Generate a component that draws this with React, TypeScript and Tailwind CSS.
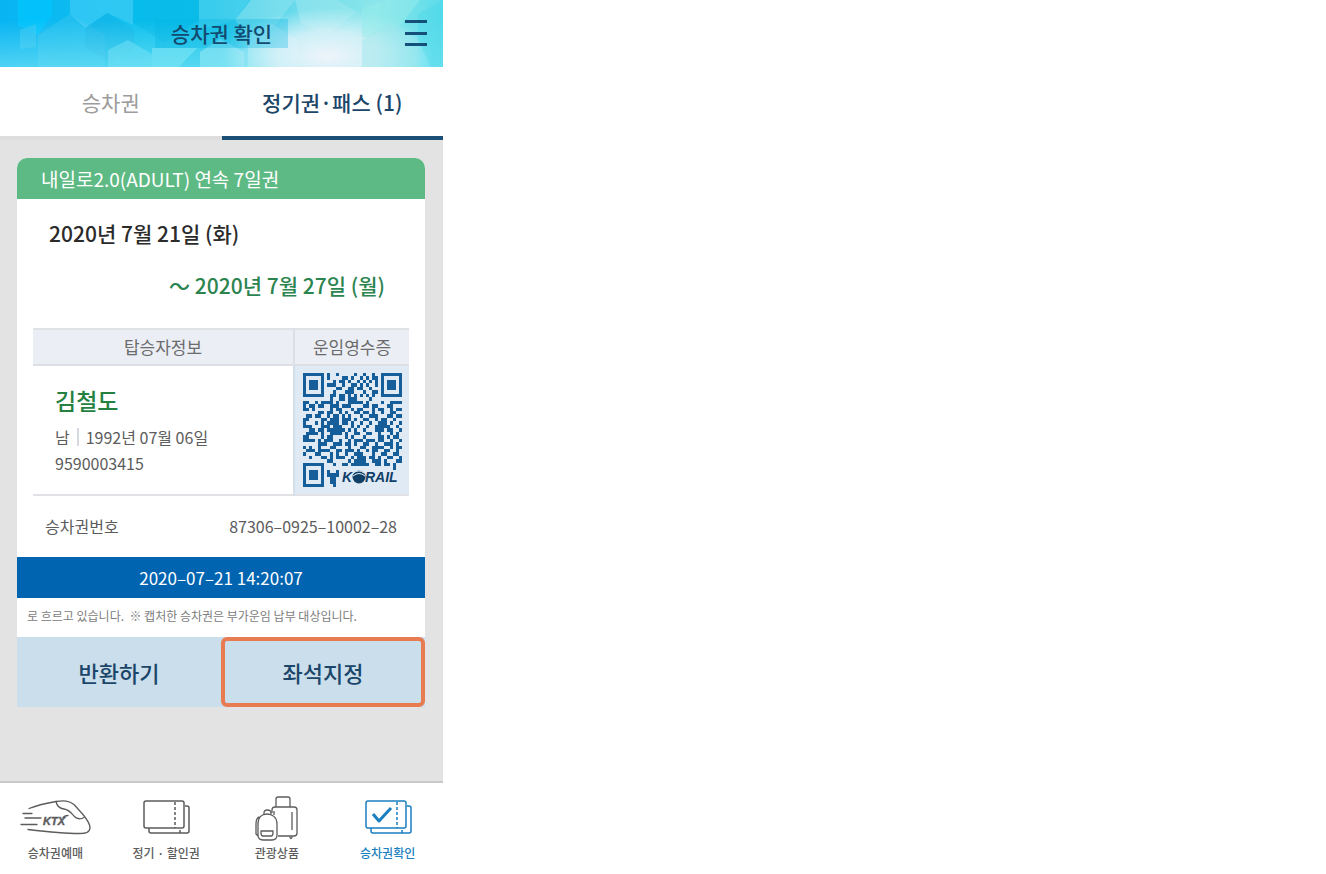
import { useState } from 'react';
import type { ReactNode } from 'react';

const FONT = "font-['Noto_Sans_CJK_KR',sans-serif]";

const QR_ROWS = [
  '#######.#..#.....#..#..#..#######',
  '#.....#.#....##.#..#.#.##.#.....#',
  '#.###.#...#.##.#..#.#.#.#.#.###.#',
  '#.###.#.###..#..##.#.#..#.#.###.#',
  '#.###.#....##..##.##..#...#.###.#',
  '#.....#...#...###...#..##.#.....#',
  '#######..##.##.#.#.#.#.#..#######',
  '.........#..##.###....#..........',
  '##..#.####.#...#####.#....#..####',
  '#.##.##..###.###....##.##...##...',
  '##.#.....#.##...#.##...#.##..#.##',
  '.....##.##..#.#..##.##.#..#..##..',
  '.##.##..#.##.#.#...#..###...##.##',
  '##....##.###.###.#..##..#.##..#..',
  '#...#.#.####.##.#..#..#..###.#..#',
  '###...###.###...#.#..#..#####..#.',
  '..##.##.######.#.#..#...###.##..#',
  '.####.#..####.#..##..##..#...#.#.',
  '##....#.##....#.#...#....##.#.##.',
  '####.#.###..#..#.###.###.##..#..#',
  '.....###..###.##.#..##..#..###.#.',
  '#.#..#...##....#...##..####..#.##',
  '.###.####..##.###.#..#.##..##..#.',
  '#...##...#.#..#..###...#..##..##.',
  '..#...##.#.###..#.###.##.#..##..#',
  '........##.....#.####..###.#...##',
  '#######...#..##.######..##.##.#..',
  '#.....#.......................#..',
  '#.###.#.#..#.....................',
  '#.###.#.####.....................',
  '#.###.#..##......................',
  '#.....#..##......................',
  '#######...#......................',
];

// one path for all dark modules, 3 wide and 114/33 high
const QR_PATH = QR_ROWS.flatMap((row, y) =>
  [...row.matchAll(/#+/g)].map((run) => `M${run.index} ${y}h${run[0].length}v1h-${run[0].length}z`),
).join('');

type TabId = 'ticket' | 'pass';

const TABS: { id: TabId; label: string }[] = [
  { id: 'ticket', label: '승차권' },
  { id: 'pass', label: '정기권·패스 (1)' },
];

const NAV: { label: string; icon: ReactNode; active?: boolean }[] = [
  { label: '승차권예매', icon: <TrainIcon /> },
  { label: '정기 · 할인권', icon: <TicketIcon /> },
  { label: '관광상품', icon: <LuggageIcon /> },
  { label: '승차권확인', icon: <TicketIcon checked />, active: true },
];

export default function App() {
  const [tab, setTab] = useState<TabId>('pass');

  return (
    <div className={`min-h-screen bg-white ${FONT}`}>
      <div className="flex min-h-screen w-full max-w-[443px] flex-col bg-[#e3e3e3]">
        <Header />
        <div role="tablist" className="grid grid-cols-2 bg-white">
          {TABS.map((t) => (
            <button
              key={t.id}
              type="button"
              role="tab"
              aria-selected={tab === t.id}
              onClick={() => setTab(t.id)}
              className={`h-[73px] border-b-4 pt-0.5 text-[21px] ${
                tab === t.id
                  ? 'border-[#1b4f75] font-medium text-[#1b4669]'
                  : 'border-[#dedede] text-[#9c9c9c]'
              }`}
            >
              {t.label}
            </button>
          ))}
        </div>
        <main className="flex-1 pt-[18px] pr-[18px] pb-8 pl-[17px]">
          <PassCard />
        </main>
        <BottomNav />
      </div>
    </div>
  );
}

function Header() {
  return (
    <header className="relative flex h-[67px] items-center justify-center bg-[#43cfee]">
      <HeaderPattern />
      <h1 className="relative bg-[#00b4e4]/30 px-4 text-[21px] leading-[29px] font-medium text-[#124a70]">
        승차권 확인
      </h1>
      <button
        type="button"
        aria-label="메뉴"
        className="absolute top-[19px] right-4 flex h-7 w-[22px] flex-col justify-between py-px"
      >
        <span className="block h-[3px] w-full bg-[#14507a]" />
        <span className="block h-[3px] w-full bg-[#14507a]" />
        <span className="block h-[3px] w-full bg-[#14507a]" />
      </button>
    </header>
  );
}

function HeaderPattern() {
  return (
    <svg
      viewBox="0 0 443 67"
      preserveAspectRatio="none"
      aria-hidden="true"
      className="absolute inset-0 h-full w-full"
    >
      <defs>
        <linearGradient id="sky" x1="0" y1="0" x2="1" y2="0">
          <stop offset="0" stopColor="#08b4f3" />
          <stop offset="0.3" stopColor="#10c1ee" />
          <stop offset="0.48" stopColor="#1cc4ea" />
          <stop offset="0.68" stopColor="#6fdcec" />
          <stop offset="0.85" stopColor="#8be6ea" />
          <stop offset="1" stopColor="#5cdcea" />
        </linearGradient>
        <linearGradient id="haze" x1="0" y1="0" x2="0" y2="1">
          <stop offset="0.3" stopColor="#7fe6f5" stopOpacity="0" />
          <stop offset="1" stopColor="#7fe6f5" stopOpacity="0.6" />
        </linearGradient>
        <radialGradient id="glow">
          <stop offset="0" stopColor="#eef4fa" />
          <stop offset="0.5" stopColor="#e2f3f9" stopOpacity="0.8" />
          <stop offset="1" stopColor="#dff6fa" stopOpacity="0" />
        </radialGradient>
      </defs>
      <rect width="443" height="67" fill="url(#sky)" />
      <path d="M18 0h34v15L38 35 18 25z" fill="#00c6ff" opacity="0.7" />
      <path d="M20 30l16-6v23l-16 2z" fill="#35c5f2" opacity="0.6" />
      <path d="M38 35l32-21 35 21v32H38z" fill="#3ac5ef" opacity="0.45" />
      <path d="M85 28l22-15 27 17v18l-24 14-25-14z" fill="#17abe0" opacity="0.35" />
      <path d="M70 0h63v25L107 13 85 28 70 14z" fill="#50d0f7" opacity="0.5" />
      <path d="M133 0h66v20l-34 23-32-20z" fill="#00b7e8" opacity="0.55" />
      <path d="M108 50l20-10 24 14v13h-44z" fill="#70e0f5" opacity="0.5" />
      <path d="M152 48l45 0-18 19h-27z" fill="#79e4f3" opacity="0.6" />
      <path d="M199 0h50l-14 20-36 10z" fill="#4fd2ee" opacity="0.6" />
      <path d="M200 52l20-13 24 13v15h-44z" fill="#a4eaf3" opacity="0.6" />
      <path d="M235 20l16-20h44l-22 28-24 10z" fill="#8ce2ee" opacity="0.6" />
      <path d="M248 38l24-14 26 16v27h-50z" fill="#b6edf4" opacity="0.5" />
      <path d="M295 0h42l20 12-32 24-24-13z" fill="#9de7ee" opacity="0.5" />
      <rect width="443" height="67" fill="url(#haze)" />
      <ellipse cx="328" cy="56" rx="105" ry="48" fill="url(#glow)" />
      <path d="M362 8l24-8h34l-20 26-38 12z" fill="#96ebea" opacity="0.5" />
      <path d="M362 40l28-18 28 18v27h-56z" fill="#9ce6ec" opacity="0.45" />
      <path d="M418 14l25-14v67h-12l-13-27z" fill="#36d4e6" opacity="0.25" />
    </svg>
  );
}

function PassCard() {
  return (
    <article className="rounded-t-[10px] bg-white">
      <h2 className="rounded-t-[10px] bg-[#5eba84] pl-6 text-[19px] leading-[41px] text-white">
        내일로2.0(ADULT) 연속 7일권
      </h2>
      <div className="flex flex-col gap-5 pt-[18px] pb-[27px] text-[21px] leading-8 font-medium">
        <p className="pl-8 text-[#2b2b2b]">2020년 7월 21일 (화)</p>
        <p className="pr-10 text-right text-[#2c8450]">～ 2020년 7월 27일 (월)</p>
      </div>

      <div className="px-4">
        <table className="w-full table-fixed border-collapse border-y-2 border-[#e0e2e5]">
          <thead>
            <tr className="h-9 border-b-2 border-[#dcdfe3] bg-[#ebeff5] text-[17px] leading-6 text-[#6b6b6b]">
              <th scope="col" className="font-normal">
                탑승자정보
              </th>
              <th scope="col" className="w-[115px] border-l-2 border-[#dcdfe3] font-normal">
                운임영수증
              </th>
            </tr>
          </thead>
          <tbody>
            <tr>
              <td className="pb-1 pl-[22px] align-middle text-[16px] leading-[26px] text-[#5c5c5c]">
                <p className="pb-1 text-[23px] leading-10 font-medium text-[#25813f]">김철도</p>
                <p className="flex items-center">
                  남
                  <span className="mx-[7px] h-[18px] w-0.5 bg-[#d6d8e2]" />
                  1992년 07월 06일
                </p>
                <p>9590003415</p>
              </td>
              <td className="border-l-2 border-[#d5dfea] bg-[#e0eaf4] py-[7px]">
                <QrCode />
              </td>
            </tr>
          </tbody>
        </table>
      </div>

      <dl className="flex h-[61px] items-center justify-between px-7 pb-0.5 text-[16px] text-[#5c5c5c]">
        <dt>승차권번호</dt>
        <dd>87306–0925–10002–28</dd>
      </dl>
      <p className="bg-[#0064b1] text-center text-[17px] leading-[41px] text-white">
        2020–07–21 14:20:07
      </p>
      <p className="overflow-hidden pb-1 pl-[10px] text-[12px] leading-[35px] whitespace-pre text-[#7c7c7c]">
        로 흐르고 있습니다.  ※ 캡처한 승차권은 부가운임 납부 대상입니다.
      </p>
      <div className="grid grid-cols-2 bg-[#cbdeec] text-[22px] font-medium text-[#1b4669]">
        <button type="button" className="h-[70px]">
          반환하기
        </button>
        <button type="button" className="h-[70px] rounded-md border-4 border-[#e87b50]">
          좌석지정
        </button>
      </div>
    </article>
  );
}

function QrCode() {
  return (
    <svg
      viewBox="0 0 99 114"
      role="img"
      aria-label="QR"
      className="mx-auto h-[114px] w-[99px]"
    >
      <path
        d={QR_PATH}
        fill="#155e99"
        transform="scale(3 3.4545)"
        shapeRendering="crispEdges"
      />
      <g
        fill="#103f68"
        fontFamily="Liberation Sans, sans-serif"
        fontWeight="700"
        fontStyle="italic"
        fontSize="14"
      >
        <text x="39" y="109">
          K
        </text>
        <text x="62" y="109">
          RAIL
        </text>
        <circle cx="56" cy="104" r="6.5" />
        <path
          d="M50 103q6-5 12 0M50 100q6-4 11 0"
          fill="none"
          stroke="#e0eaf4"
          strokeWidth="1"
        />
      </g>
    </svg>
  );
}

function BottomNav() {
  return (
    <nav className="grid h-[93px] grid-cols-4 border-t-2 border-[#c9c9c9] bg-white">
      {NAV.map((item) => (
        <a
          key={item.label}
          href="#"
          aria-current={item.active ? 'page' : undefined}
          className={`flex flex-col items-center pt-3 text-[12px] leading-5 font-medium ${
            item.active ? 'text-[#1a7fc0]' : 'text-[#5c5c5c]'
          }`}
        >
          {item.icon}
          <span>{item.label}</span>
        </a>
      ))}
    </nav>
  );
}

function TrainIcon() {
  return (
    <svg
      viewBox="0 0 72 48"
      className="h-12 w-[72px]"
      fill="none"
      stroke="currentColor"
      strokeWidth="1.3"
      strokeLinecap="round"
      strokeLinejoin="round"
      aria-hidden="true"
    >
      <path d="M10 13.500C19 10 28 8 37 6.500c8-1 13-1 18 3l9 10c4 5 7 9 7 13 0 5-4 6-11 6-17 0-34-2-51-4" />
      <path d="M37 6.500c1 5 3 7 8 7.500 6 1 7 4 11 8 2 2 6 2.500 9 0.500" />
      <path d="M4 18.500h9M6 23h16M2 29.500h16" />
      <text
        x="24"
        y="30"
        fill="currentColor"
        strokeWidth="0.4"
        fontFamily="Liberation Sans, sans-serif"
        fontWeight="700"
        fontStyle="italic"
        fontSize="11"
      >
        KTX
      </text>
      <path d="M44 22.500q2-2 5-2" />
    </svg>
  );
}

function TicketIcon({ checked = false }: { checked?: boolean }) {
  return (
    <svg
      viewBox="0 0 48 48"
      className="ml-0.5 size-12"
      fill="none"
      stroke="currentColor"
      strokeWidth="1.5"
      strokeLinejoin="round"
      aria-hidden="true"
    >
      <rect x="1" y="6" width="40" height="27" rx="2" />
      <path d="M42 11h2q2 0 2 2v23q0 2-2 2H8q-2 0-2-2v-3" />
      <path d="M32 7v26M37 35v3" strokeDasharray="3 2" />
      {checked && <path d="M8 19l6 7 12-13" strokeWidth="3" />}
    </svg>
  );
}

function LuggageIcon() {
  return (
    <svg
      viewBox="0 0 44 48"
      className="h-12 w-11"
      fill="none"
      stroke="currentColor"
      strokeWidth="1.3"
      strokeLinejoin="round"
      aria-hidden="true"
    >
      <path d="M21 12V4q0-2 2-2h10q2 0 2 2v8M17 18v-3q0-3 3-3h19q3 0 3 3v23q0 3-3 3H23M19 16v4M37 17v18" />
      <path d="M35 41.500v1q1 2 2 0v-1" />
      <path d="M3 29c0-7 4-10 9-10s10 3 10 10v11q0 5-5 5H8q-5 0-5-5zM9 19v-1q0-3 3.500-3t3.500 3v1M5 22c-3 0-4 3-4 7v10l2 2" />
      <path d="M6 36h12v2q0 3-2 3H8q-2 0-2-3z" />
    </svg>
  );
}
